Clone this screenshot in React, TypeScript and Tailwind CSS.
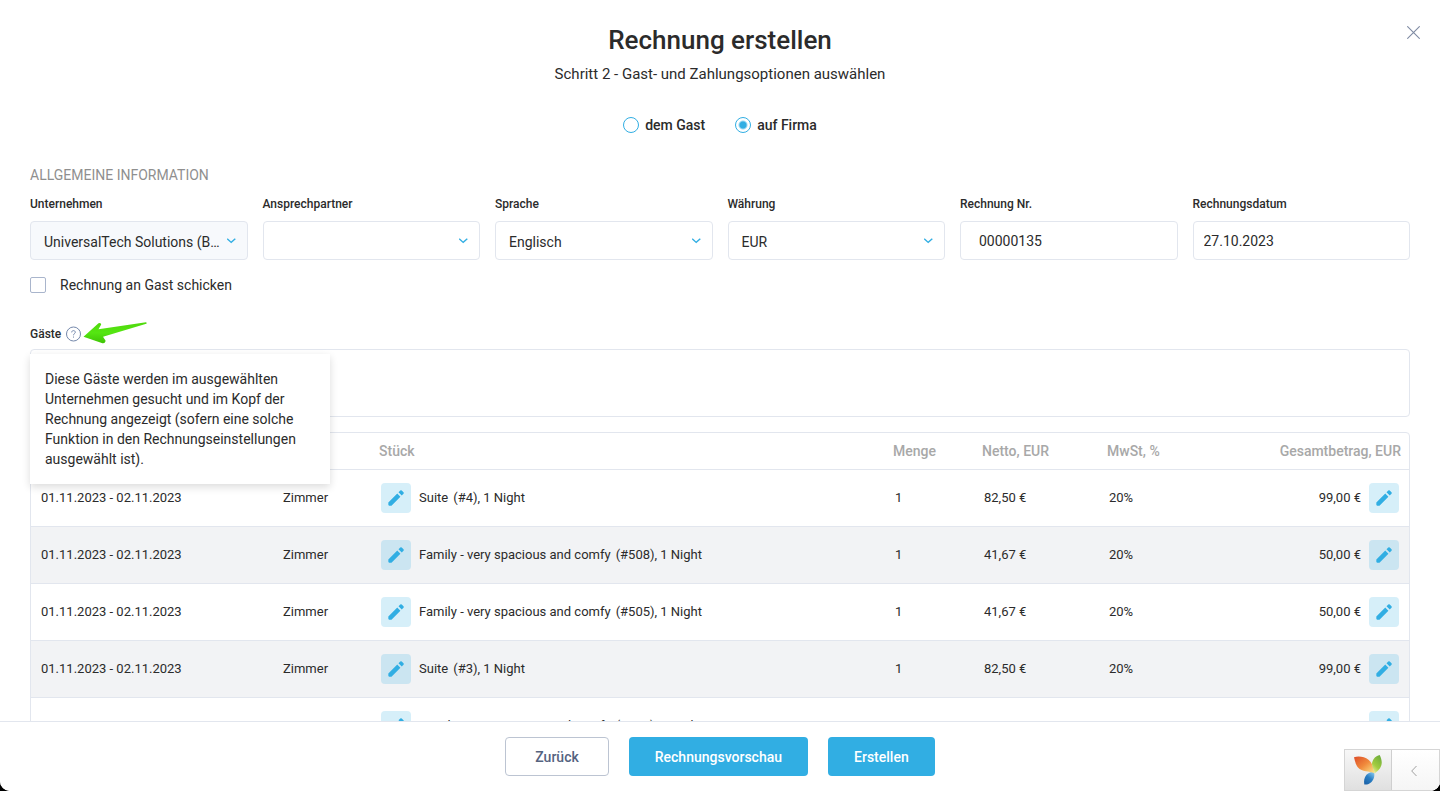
import { useState } from "react";
import type { ReactNode } from "react";

const items = [
  { id: 1, name: "Suite", room: "(#4), 1 Night", netto: "82,50 €", total: "99,00 €" },
  { id: 2, name: "Family - very spacious and comfy", room: "(#508), 1 Night", netto: "41,67 €", total: "50,00 €" },
  { id: 3, name: "Family - very spacious and comfy", room: "(#505), 1 Night", netto: "41,67 €", total: "50,00 €" },
  { id: 4, name: "Suite", room: "(#3), 1 Night", netto: "82,50 €", total: "99,00 €" },
  { id: 5, name: "Family - very spacious and comfy", room: "(#506), 1 Night", netto: "41,67 €", total: "50,00 €" },
];

const inputClass =
  "block w-full h-[39px] rounded-sm border border-[#e2e6ee] text-sm text-[#2b2b2b] outline-none focus:border-[#31aee3]";

function Field({ id, label, children }: { id: string; label: string; children: ReactNode }) {
  return (
    <div>
      <label htmlFor={id} className="block text-xs font-medium mb-[9px]">
        {label}
      </label>
      {children}
    </div>
  );
}

function SelectField({
  id,
  label,
  value,
  muted = false,
}: {
  id: string;
  label: string;
  value: string;
  muted?: boolean;
}) {
  return (
    <Field id={id} label={label}>
      <div className="relative">
        <select
          id={id}
          className={`${inputClass} appearance-none pl-[13px] pr-6 pt-0.5 ${muted ? "bg-[#f7f9fc]" : "bg-white"}`}
        >
          <option>{value}</option>
        </select>
        <svg
          className="absolute right-3 top-4 pointer-events-none"
          width="9"
          height="7"
          viewBox="0 0 9 7"
          fill="none"
          stroke="#31aee3"
          strokeWidth="1.4"
        >
          <path d="M0.200 1.800 4.200 5.400 8.300 1.800" />
        </svg>
      </div>
    </Field>
  );
}

function RadioOption({
  label,
  checked,
  onChange,
}: {
  label: string;
  checked: boolean;
  onChange: () => void;
}) {
  return (
    <label className="flex items-center gap-1.5 text-sm font-medium cursor-pointer">
      <input
        type="radio"
        name="recipient"
        checked={checked}
        onChange={onChange}
        className="appearance-none size-4 rounded-full border border-[#31aee3] bg-white checked:bg-[radial-gradient(circle,#31aee3_3px,#fff_5px)]"
      />
      {label}
    </label>
  );
}

function EditButton({ label }: { label: string }) {
  return (
    <button
      type="button"
      aria-label={label}
      className="flex size-[30px] shrink-0 items-center justify-center rounded-sm bg-[#31aee3]/20 hover:bg-[#31aee3]/30"
    >
      <svg width="20" height="20" viewBox="0 0 24 24" fill="#31aee3">
        <path d="M2.800 17.400V20.200a1 1 0 0 0 1 1h2.800L17.300 10.500l-3.800-3.800L2.800 17.400zM21 6.900a1.300 1.300 0 0 0 0-1.800l-2.100-2.100a1.300 1.300 0 0 0-1.800 0l-2.100 2.100 3.900 3.900 2.100-2.100z" />
      </svg>
    </button>
  );
}

function YiiLogo() {
  return (
    <svg width="28" height="30" viewBox="0 0 28 30">
      <defs>
        <linearGradient id="petalOrange" x1="0" y1="0" x2="1" y2="1">
          <stop offset="0" stopColor="#dd4c28" />
          <stop offset="0.5" stopColor="#f08a3c" />
          <stop offset="1" stopColor="#fde98a" />
        </linearGradient>
        <linearGradient id="petalGreen" x1="0.7" y1="0" x2="0.2" y2="1">
          <stop offset="0" stopColor="#6fae3c" />
          <stop offset="0.6" stopColor="#a3cc3f" />
          <stop offset="1" stopColor="#eef0a0" />
        </linearGradient>
        <linearGradient id="petalBlue" x1="0.8" y1="0" x2="0.2" y2="1">
          <stop offset="0" stopColor="#8ccbf0" />
          <stop offset="0.5" stopColor="#2a7fc4" />
          <stop offset="1" stopColor="#1b62a8" />
        </linearGradient>
      </defs>
      <path d="M20 16C20.800 20 20.500 24 17.500 27C15.500 29 12.800 29.900 10.300 29.500C9.700 26 10.200 22.500 12.500 19.800C14.500 17.500 17.500 17.500 20 16Z" fill="url(#petalBlue)" />
      <path d="M0 2.200C5 0.800 10.500 1.800 14.500 4.800C18 7.500 19.500 11.500 20.500 18.300C15 15.500 8 17.500 4 12.500C1.500 9.500 0.800 5.500 0 2.200Z" fill="url(#petalOrange)" />
      <path d="M25.600 0C28 4.500 28.800 9.500 25.800 13.500C23.800 16.200 21.800 17 20.800 18.500C20 14 17.200 11.500 18.200 7.200C19.100 3.400 22 1.200 25.600 0Z" fill="url(#petalGreen)" />
    </svg>
  );
}

export default function App() {
  const [recipient, setRecipient] = useState("company");

  return (
    <div className="h-screen bg-black font-[Roboto,sans-serif] text-[#2b2b2b]">
      <div className="relative flex h-full flex-col overflow-hidden rounded-b-[10px] bg-white">
        <button type="button" aria-label="Schließen" className="absolute right-5 top-[26px]">
          <svg width="13" height="13" viewBox="0 0 13 13" stroke="#7f8ba3" strokeWidth="1.1">
            <path d="M0.300 0.300 12.700 12.700M12.700 0.300 0.300 12.700" />
          </svg>
        </button>

        <main className="min-h-0 flex-1 overflow-y-auto px-[30px] [scrollbar-width:none]">
          <header className="pt-6 text-center">
            <h1 className="text-[26px] leading-8 font-medium">Rechnung erstellen</h1>
            <p className="mt-2 text-[15px] leading-5">Schritt 2 - Gast- und Zahlungsoptionen auswählen</p>
          </header>

          <div className="mt-[31px] flex justify-center gap-[30px]">
            <RadioOption
              label="dem Gast"
              checked={recipient === "guest"}
              onChange={() => setRecipient("guest")}
            />
            <RadioOption
              label="auf Firma"
              checked={recipient === "company"}
              onChange={() => setRecipient("company")}
            />
          </div>

          <h2 className="mt-[30px] text-sm uppercase text-[#8f8f8f]">Allgemeine Information</h2>

          <div className="mt-[11px] grid grid-cols-6 gap-[15px]">
            <SelectField id="company" label="Unternehmen" value="UniversalTech Solutions (B…" muted />
            <SelectField id="contact" label="Ansprechpartner" value="" />
            <SelectField id="language" label="Sprache" value="Englisch" />
            <SelectField id="currency" label="Währung" value="EUR" />
            <Field id="number" label="Rechnung Nr.">
              <input id="number" type="text" defaultValue="00000135" className={`${inputClass} px-[18px]`} />
            </Field>
            <Field id="date" label="Rechnungsdatum">
              <input id="date" type="text" defaultValue="27.10.2023" className={`${inputClass} px-2.5`} />
            </Field>
          </div>

          <label className="mt-[15px] flex w-fit items-center gap-3.5 text-sm cursor-pointer">
            <input
              type="checkbox"
              className="appearance-none size-4 rounded-xs border border-[#a9b5cc] bg-white checked:bg-[#31aee3]"
            />
            Rechnung an Gast schicken
          </label>

          <div className="relative mt-[31px]">
            <div className="flex h-4 items-center">
              <label htmlFor="guests" className="text-xs font-medium">
                Gäste
              </label>
              <button type="button" aria-label="Hilfe" aria-describedby="guests-hint" className="ml-1">
                <svg width="16" height="16" viewBox="0 0 16 16" fill="none" stroke="#7488ab">
                  <circle cx="8.500" cy="8" r="7" />
                  <path d="M6.700 6.400C6.700 5.200 7.500 4.600 8.500 4.600S10.300 5.300 10.300 6.300C10.300 7.500 8.500 7.700 8.500 9.300M8.500 10.500V11.600" />
                </svg>
              </button>
              <svg className="ml-0.5" width="65" height="24" viewBox="0 0 65 24">
                <defs>
                  <linearGradient id="arrowFill" x1="0" y1="0" x2="0" y2="1">
                    <stop offset="0" stopColor="#4fd80c" />
                    <stop offset="0.5" stopColor="#55e612" />
                    <stop offset="1" stopColor="#3fc406" />
                  </linearGradient>
                </defs>
                <path
                  d="M0.500 14.800 15.500 1.300Q18 0.300 18.200 2.500L15.500 7.200 63 0.200Q64.500 0.700 63.300 1.800L20 14.800 22.500 18.500Q22.500 21.500 19.500 21.200Z"
                  fill="url(#arrowFill)"
                />
              </svg>
            </div>
            <textarea
              id="guests"
              className="mt-[7px] block h-[68px] w-full resize-none rounded-sm border border-[#e2e6ee] bg-white p-2.5 text-sm outline-none"
            />
            <div
              id="guests-hint"
              role="tooltip"
              className="absolute left-0 top-7 z-10 w-[300px] bg-white p-[15px] text-sm leading-5 shadow-[0_3px_8px_rgba(0,0,0,0.14)]"
            >
              Diese Gäste werden im ausgewählten Unternehmen gesucht und im Kopf der Rechnung angezeigt
              (sofern eine solche Funktion in den Rechnungseinstellungen ausgewählt ist).
            </div>
          </div>

          <div className="mt-[15px] overflow-hidden rounded-sm border border-[#e2e6ee]">
            <table className="w-full table-fixed border-collapse text-[13px]">
              <colgroup>
                <col className="w-[242px]" />
                <col className="w-[98px]" />
                <col />
                <col className="w-[89px]" />
                <col className="w-[125px]" />
                <col className="w-[310px]" />
              </colgroup>
              <thead>
                <tr className="h-9 border-b border-[#e2e6ee] text-left text-sm text-[#a8a8a8] [&>th]:px-2 [&>th]:font-medium">
                  <th />
                  <th />
                  <th>Stück</th>
                  <th>Menge</th>
                  <th>Netto, EUR</th>
                  <th>
                    <div className="flex justify-between">
                      <span>MwSt, %</span>
                      <span>Gesamtbetrag, EUR</span>
                    </div>
                  </th>
                </tr>
              </thead>
              <tbody>
                {items.map((item) => (
                  <tr
                    key={item.id}
                    className="h-[57px] border-b border-[#e2e6ee] even:bg-[#f2f3f5] [&>td]:px-2.5"
                  >
                    <td>01.11.2023 - 02.11.2023</td>
                    <td>Zimmer</td>
                    <td>
                      <div className="flex items-center gap-2">
                        <EditButton label="Position bearbeiten" />
                        <span>
                          <span className="mr-[5px]">{item.name}</span>
                          {item.room}
                        </span>
                      </div>
                    </td>
                    <td>1</td>
                    <td>{item.netto}</td>
                    <td>
                      <div className="flex items-center justify-between">
                        <span>20%</span>
                        <div className="flex items-center gap-2">
                          <span>{item.total}</span>
                          <EditButton label="Betrag bearbeiten" />
                        </div>
                      </div>
                    </td>
                  </tr>
                ))}
              </tbody>
            </table>
          </div>
        </main>

        <footer className="flex justify-center gap-5 border-t border-[#e2e6ee] bg-white py-[15px] text-sm font-medium">
          <button type="button" className="h-[39px] rounded-sm border border-[#bcc4d2] px-[29px] text-[#55637f]">
            Zurück
          </button>
          <button type="button" className="h-[39px] rounded-sm bg-[#31aee3] px-[26px] text-white hover:bg-[#1d9fd6]">
            Rechnungsvorschau
          </button>
          <button type="button" className="h-[39px] rounded-sm bg-[#31aee3] px-[26px] text-white hover:bg-[#1d9fd6]">
            Erstellen
          </button>
        </footer>

        {/* debug toolbar */}
        <div className="absolute bottom-0 right-0 flex h-[42px] w-24 border border-[#d5d5d5] bg-white">
          <a
            href="#debug"
            aria-label="Debugger"
            className="flex w-[47px] items-center justify-center border-r border-[#cfcfcf] bg-linear-to-b from-[#f7f7f7] to-[#e0e0e0]"
          >
            <YiiLogo />
          </a>
          <button
            type="button"
            aria-label="Toolbar öffnen"
            className="flex flex-1 items-center justify-center bg-linear-to-b from-white to-[#f5f5f5] pr-1"
          >
            <svg width="6" height="11" viewBox="0 0 6 11" fill="none" stroke="#a0a0a0">
              <path d="M5.500 1 0.700 6 5.500 11" />
            </svg>
          </button>
        </div>
      </div>
    </div>
  );
}
